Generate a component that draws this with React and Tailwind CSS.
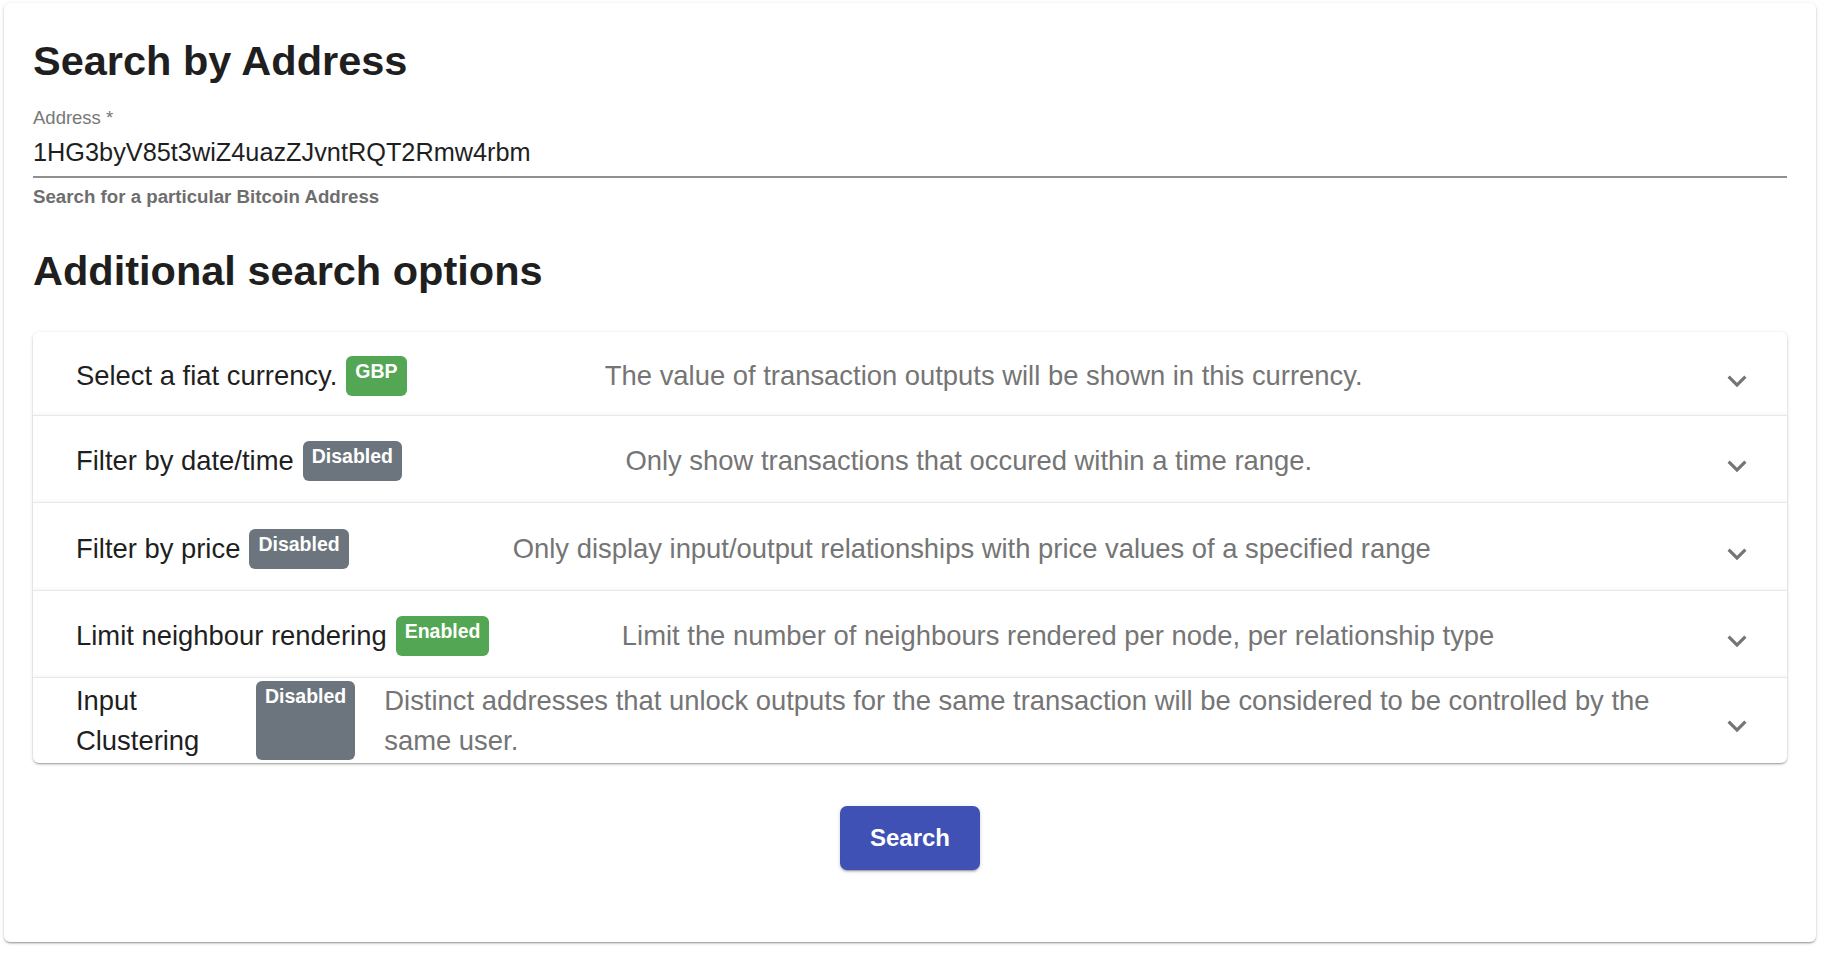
import React from "react";

const options = [
	{
		title: "Select a fiat currency.",
		badge: "GBP",
		on: true,
		desc: "The value of transaction outputs will be shown in this currency.",
		h: "h-[83px]",
	},
	{
		title: "Filter by date/time",
		badge: "Disabled",
		on: false,
		desc: "Only show transactions that occured within a time range.",
		h: "h-[87px]",
	},
	{
		title: "Filter by price",
		badge: "Disabled",
		on: false,
		desc: "Only display input/output relationships with price values of a specified range",
		h: "h-[88px]",
	},
	{
		title: "Limit neighbour rendering",
		badge: "Enabled",
		on: true,
		desc: "Limit the number of neighbours rendered per node, per relationship type",
		h: "h-[87px]",
	},
];

function ExpandIcon() {
	return (
		<svg
			viewBox="0 0 24 24"
			className="mt-[10px] h-[38px] w-[38px] shrink-0 fill-[#757575]"
		>
			<path d="M16.59 8.59 12 13.17 7.41 8.59 6 10l6 6 6-6z" />
		</svg>
	);
}

function Badge({ label, on }) {
	return (
		<span
			className={`ml-[9px] shrink-0 rounded-[6px] px-[9px] pt-[6px] text-[19.5px] font-bold leading-none text-white ${
				on ? "bg-[#53a653]" : "bg-[#6c757d]"
			}`}
		>
			{label}
		</span>
	);
}

function OptionRow({ opt, first }) {
	return (
		<div
			className={`relative flex items-center pl-[43px] pr-[31px] pt-[4px] ${opt.h} ${
				first
					? ""
					: "border-t border-[#e8e8e8] shadow-[0_-2px_3px_rgba(0,0,0,0.035)]"
			}`}
		>
			<div className="mr-[17px] flex flex-1 items-stretch">
				<p className="shrink-0 text-[27.4px] leading-[40px] text-[#1f1f1f]">
					{opt.title}
				</p>
				<Badge label={opt.badge} on={opt.on} />
				<div className="flex-1" />
				<p className="ml-[29px] text-[27.4px] leading-[40px] text-[#757575]">
					{opt.desc}
				</p>
				<div className="flex-[2]" />
			</div>
			<ExpandIcon />
		</div>
	);
}

export default function App() {
	return (
		<div className="min-h-screen bg-white pl-[4px] pt-[3px] font-['Liberation_Sans',Arial,sans-serif]">
			<div className="flex w-[1812px] flex-col rounded-[6px] bg-white px-[29px] pb-[72px] pt-[34px] shadow-[0_2px_2px_-1px_rgba(0,0,0,0.25),0_1px_2px_0_rgba(0,0,0,0.14),0_1px_4px_0_rgba(0,0,0,0.12)]">
				<h1 className="text-[41.5px] font-bold leading-[48px] text-[#1f1f1f]">
					Search by Address
				</h1>

				<label className="mt-[22px] text-[18.5px] leading-[22px] text-[#777777]">
					Address *
				</label>
				<div className="mt-[8px] border-b-2 border-[#8f8f8f] pb-[9px] text-[25.3px] leading-[30px] text-[#1f1f1f]">
					1HG3byV85t3wiZ4uazZJvntRQT2Rmw4rbm
				</div>
				<p className="mt-[8px] text-[18.7px] font-bold leading-[22px] text-[#6e6e6e]">
					Search for a particular Bitcoin Address
				</p>

				<h2 className="mt-[39px] text-[41.5px] font-bold leading-[48px] text-[#1f1f1f]">
					Additional search options
				</h2>

				<div className="mt-[37px] rounded-[6px] bg-white shadow-[0_2px_2px_-1px_rgba(0,0,0,0.22),0_1px_2px_0_rgba(0,0,0,0.14),0_1px_4px_0_rgba(0,0,0,0.12)]">
					{options.map((opt, i) => (
						<OptionRow key={opt.title} opt={opt} first={i === 0} />
					))}
					<div className="flex h-[86px] items-center border-t border-[#e8e8e8] pl-[43px] pr-[31px] shadow-[0_-2px_3px_rgba(0,0,0,0.035)]">
						<div className="mr-[17px] flex flex-1 items-stretch self-stretch py-[3px]">
							<p className="w-[171px] shrink-0 text-[27.4px] leading-[40px] text-[#1f1f1f]">
								Input Clustering
							</p>
							<Badge label="Disabled" on={false} />
							<p className="ml-[29px] flex-1 text-[27.4px] leading-[40px] text-[#757575]">
								Distinct addresses that unlock outputs for the same transaction
								will be considered to be controlled by the same user.
							</p>
						</div>
						<ExpandIcon />
					</div>
				</div>

				<div className="mt-[43px] flex justify-center">
					<button className="h-[64px] w-[140px] rounded-[7px] bg-[#4051b5] text-[24px] font-bold text-white shadow-[0_3px_1px_-2px_rgba(0,0,0,0.2),0_2px_2px_0_rgba(0,0,0,0.14),0_1px_5px_0_rgba(0,0,0,0.12)]">
						Search
					</button>
				</div>
			</div>
		</div>
	);
}
